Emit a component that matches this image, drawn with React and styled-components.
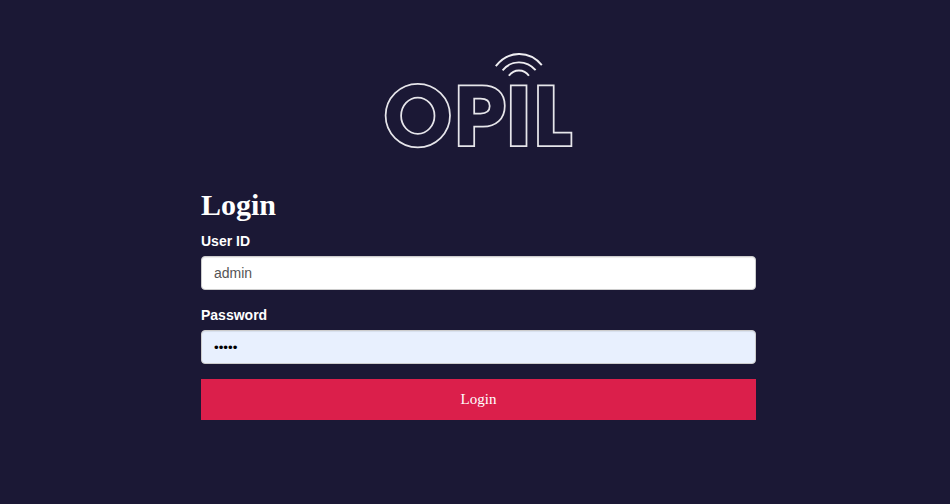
import React, { useState } from "react";
import styled, { createGlobalStyle } from "styled-components";

const GlobalStyle = createGlobalStyle`
  *, *::before, *::after { box-sizing: border-box; }
  body {
    margin: 0;
    background: #1b1835;
    color: #fff;
    font: 14px/20px "Liberation Sans", Arial, sans-serif;
  }
`;

const Page = styled.main`
  display: flex;
  flex-direction: column;
  align-items: center;
  min-height: 100vh;
  padding: 50px 0 0 7px;
`;

const Logo = styled.svg`
  display: block;
  width: 190px;
  height: 100px;
  fill: none;
  stroke: #e6e5ea;
  stroke-width: 1.75;
`;

const Form = styled.form`
  display: flex;
  flex-direction: column;
  width: 555px;
  margin-top: 38px;
`;

const Title = styled.h2`
  margin: 0 0 10px;
  font: bold 30px/33px "Liberation Serif", "Times New Roman", serif;
`;

const Field = styled.div`
  display: flex;
  flex-direction: column;
  margin-bottom: 15px;
`;

const Label = styled.label`
  margin-bottom: 5px;
  font-weight: bold;
`;

const Input = styled.input`
  width: 100%;
  height: 34px;
  padding: 6px 12px;
  border: 1px solid #ccc;
  border-radius: 4px;
  outline: none;
  background: ${({ $filled }) => ($filled ? "#e8f0fe" : "#fff")};
  color: ${({ $filled }) => ($filled ? "#000" : "#555")};
  box-shadow: inset 0 1px 1px rgba(0, 0, 0, 0.075);
  font: ${({ $filled }) => ($filled ? "13.333px" : "14px")} / 20px "Liberation Sans", Arial, sans-serif;
`;

const SubmitButton = styled.button`
  height: 41px;
  padding: 0;
  border: 0;
  background: #db1f4b;
  color: #fff;
  font: 15px/21px "Liberation Serif", "Times New Roman", serif;
  cursor: pointer;
`;

function OpilLogo() {
  return (
    <Logo viewBox="384 50 190 100" role="img" aria-label="OPIL">
      <ellipse cx="417.8" cy="115.6" rx="32.2" ry="31.8" />
      <ellipse cx="417.8" cy="115.7" rx="16.7" ry="18.1" />
      <path d="M458.7 85.3H482C496 85.3 504.8 92.5 504.8 105.7C504.8 119 496 126.7 483 126.7H474.2V146H458.7Z" />
      <path d="M474.2 98.6H480.5C486.5 98.6 489.7 101.3 489.7 106C489.7 110.8 486.5 113.5 480.5 113.5H474.2Z" />
      <path d="M510.8 85.3H526.5V146H510.8Z" />
      <path d="M538 85.3H553.7V132.7H571.4V146H538Z" />
      <g stroke="#eeedf1" strokeWidth="1.9">
        <path d="M495.8 66.2C508 50.2 529.5 50 541.8 65.2" />
        <path d="M502.6 70.4C511 59.8 526.5 59.6 535.6 70.2" />
        <path d="M508.9 75.7C514 68.7 524 68.7 528.9 75.7" />
      </g>
    </Logo>
  );
}

export default function App() {
  const [user, setUser] = useState("admin");
  const [password, setPassword] = useState("admin");
  return (
    <>
      <GlobalStyle />
      <Page>
        <OpilLogo />
        <Form onSubmit={(e) => e.preventDefault()}>
          <Title>Login</Title>
          <Field>
            <Label htmlFor="user">User ID</Label>
            <Input id="user" value={user} onChange={(e) => setUser(e.target.value)} />
          </Field>
          <Field>
            <Label htmlFor="password">Password</Label>
            <Input
              id="password"
              type="password"
              $filled
              value={password}
              onChange={(e) => setPassword(e.target.value)}
            />
          </Field>
          <SubmitButton type="submit">Login</SubmitButton>
        </Form>
      </Page>
    </>
  );
}
